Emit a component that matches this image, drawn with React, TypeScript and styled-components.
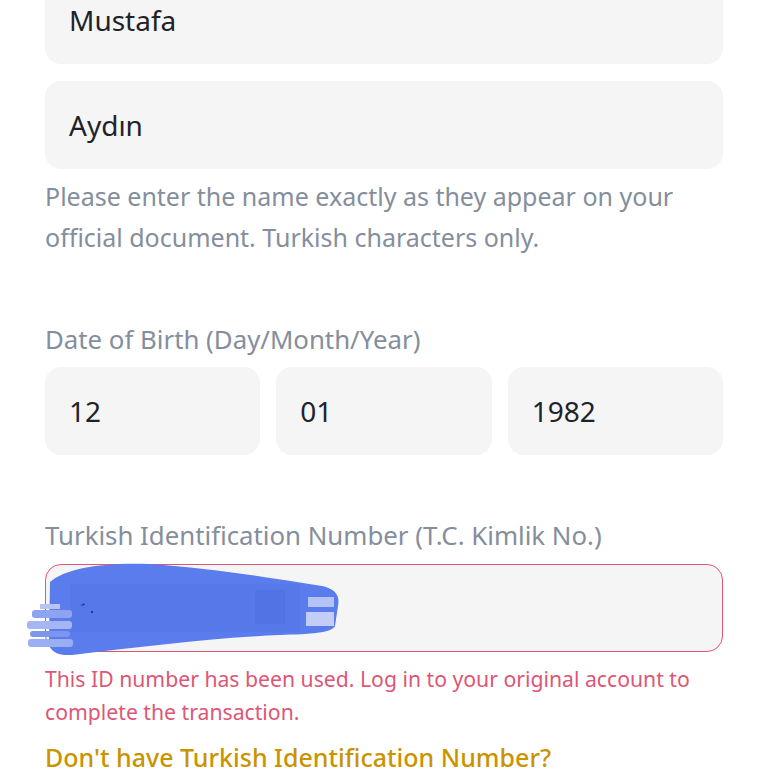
import React from "react";
import styled, { createGlobalStyle } from "styled-components";

const GlobalStyles = createGlobalStyle`
  html, body {
    margin: 0;
    padding: 0;
    background: #ffffff;
    overflow: hidden;
  }
  * {
    box-sizing: border-box;
  }
`;

const colors = {
  text: "#1e2329",
  grey: "#848e9c",
  field: "#f5f5f5",
  error: "#de5675",
  link: "#c99400",
};

const Page = styled.div`
  width: 768px;
  height: 768px;
  overflow: hidden;
  font-family: "Noto Sans", "Liberation Sans", sans-serif;
  background: #fff;
`;

const FormBody = styled.div`
  display: flex;
  flex-direction: column;
  padding: 0 45px;
  margin-top: -24px;
`;

const Input = styled.div<{ $error?: boolean }>`
  height: 88px;
  width: 100%;
  display: flex;
  align-items: center;
  padding: 0 24px;
  background: ${colors.field};
  border-radius: 16px;
  border: ${({ $error }) => ($error ? `1.5px solid ${colors.error}` : "none")};
  font-size: 28px;
  color: ${colors.text};
  flex-shrink: 0;
`;

const Stack = styled.div<{ $gap: number }>`
  display: flex;
  flex-direction: column;
  gap: ${({ $gap }) => $gap}px;
`;

const Helper = styled.p<{ $tone: "grey" | "error"; $lh: number; $size: number; $gapTop: number }>`
  margin: ${({ $gapTop }) => $gapTop}px 0 0;
  font-size: ${({ $size }) => $size}px;
  line-height: ${({ $lh }) => $lh}px;
  color: ${({ $tone }) => ($tone === "error" ? colors.error : colors.grey)};
`;

const Line = styled.span`
  display: block;
  white-space: nowrap;
`;

const Label = styled.div<{ $gapTop: number }>`
  margin-top: ${({ $gapTop }) => $gapTop}px;
  font-size: 25.8px;
  line-height: 40px;
  color: ${colors.grey};
  white-space: nowrap;
`;

const DateRow = styled.div`
  margin-top: 8px;
  display: grid;
  grid-template-columns: repeat(3, 1fr);
  gap: 16px;
`;

const IdField = styled.div`
  position: relative;
  margin-top: 9px;
`;

const Scribble = styled.svg`
  position: absolute;
  left: -35px;
  top: -10px;
  pointer-events: none;
`;

const Link = styled.a`
  margin-top: 9px;
  font-size: 25px;
  line-height: 40px;
  font-weight: 500;
  color: ${colors.link};
  text-decoration: none;
  white-space: nowrap;
`;

const Redaction = () => (
  <Scribble width="340" height="110" viewBox="0 0 340 110">
    <path
      d="M40 28 C55 14 95 8 140 10 C200 14 262 24 312 32 C326 35 330 42 328 52 L325 72 C322 79 300 80 270 81 C200 84 130 93 62 101 C46 102 38 96 39 86 Z"
      fill="#5b7ced"
    />
    <rect x="60" y="30" width="230" height="48" fill="#5577e6" opacity="0.6" />
    <rect x="245" y="36" width="30" height="34" fill="#4e70df" opacity="0.6" />
    <rect x="298" y="43" width="26" height="10" fill="#b4c2f6" />
    <rect x="296" y="58" width="28" height="14" fill="#c3cdf7" />
    <rect x="22" y="56" width="40" height="8" rx="3" fill="#8fa4f1" />
    <rect x="17" y="67" width="45" height="8" rx="3" fill="#a6b6f4" />
    <rect x="20" y="77" width="40" height="6" rx="3" fill="#7d95ee" />
    <rect x="18" y="85" width="45" height="8" rx="3" fill="#9aaef3" />
    <rect x="30" y="50" width="20" height="5" fill="#b7c4f6" />
    <path d="M70 52 l4 -3 l1 2 z" fill="#1f3aa6" />
    <circle cx="82" cy="58" r="1.2" fill="#1f3aa6" />
  </Scribble>
);

const App = () => {
  return (
    <>
      <GlobalStyles />
      <Page>
        <FormBody>
          <Stack $gap={17}>
            <Input>Mustafa</Input>
            <Input>Aydın</Input>
          </Stack>
          <Helper $tone="grey" $lh={41} $size={25} $gapTop={7}>
            <Line>Please enter the name exactly as they appear on your</Line>
            <Line>official document. Turkish characters only.</Line>
          </Helper>

          <Label $gapTop={61}>Date of Birth (Day/Month/Year)</Label>
          <DateRow>
            <Input>12</Input>
            <Input>01</Input>
            <Input>1982</Input>
          </DateRow>

          <Label $gapTop={60}>Turkish Identification Number (T.C. Kimlik No.)</Label>
          <IdField>
            <Input $error />
            <Redaction />
          </IdField>
          <Helper $tone="error" $lh={33} $size={21.2} $gapTop={10}>
            <Line>This ID number has been used. Log in to your original account to</Line>
            <Line>complete the transaction.</Line>
          </Helper>
          <Link href="#">Don't have Turkish Identification Number?</Link>
        </FormBody>
      </Page>
    </>
  );
};

export default App;
